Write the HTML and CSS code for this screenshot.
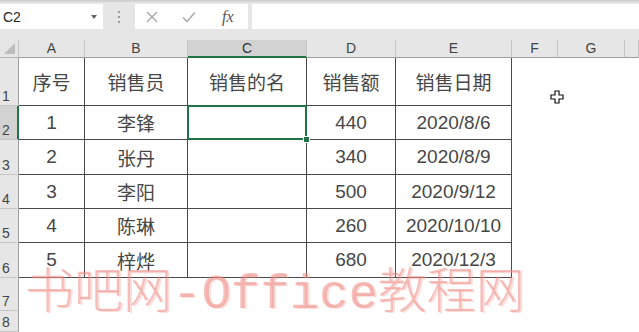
FILE: index.html
```html
<!DOCTYPE html>
<html>

<head>
    <title>销售表</title>
    <meta charset="UTF-8">
    <link rel="stylesheet" href="styles.css">
</head>

<body>
    <div class="app">
        <div class="toolbar">
            <div class="namebox">
                <span>C2</span>
                <span class="caret"></span>
            </div>
            <div class="grip"><i></i><i></i><i></i></div>
            <div class="fxbox">
                <svg class="ico" width="14" height="14" viewBox="0 0 14 14">
                    <path d="M2 2 L12 12 M12 2 L2 12" stroke="#a8a8a8" stroke-width="1.4" fill="none" />
                </svg>
                <svg class="ico" width="16" height="14" viewBox="0 0 16 14">
                    <path d="M2 7.5 L6 11.5 L14 2.5" stroke="#a8a8a8" stroke-width="1.5" fill="none" />
                </svg>
                <span class="fx">fx</span>
            </div>
            <div class="formula"></div>
        </div>

        <div class="sheet">
            <!-- column headers -->
            <div class="corner"><span class="tri"></span></div>
            <div class="colhead">A</div>
            <div class="colhead">B</div>
            <div class="colhead active">C</div>
            <div class="colhead">D</div>
            <div class="colhead">E</div>
            <div class="colhead">F</div>
            <div class="colhead">G</div>
            <div class="colhead"></div>

            <!-- row 1 -->
            <div class="rowhead">1</div>
            <div class="cell t">序号</div>
            <div class="cell t">销售员</div>
            <div class="cell t">销售的名</div>
            <div class="cell t">销售额</div>
            <div class="cell t">销售日期</div>
            <div class="blank"><svg class="cursor" width="14" height="14" viewBox="0 0 14 14">
                    <path d="M5 1 H9 V5 H13 V9 H9 V13 H5 V9 H1 V5 H5 Z" fill="#fff" stroke="#111" stroke-width="1.2" />
                </svg></div>
            <div class="blank"></div>
            <div class="blank"></div>

            <!-- row 2 -->
            <div class="rowhead active">2</div>
            <div class="cell t">1</div>
            <div class="cell t">李锋</div>
            <div class="cell t sel"></div>
            <div class="cell t">440</div>
            <div class="cell t">2020/8/6</div>
            <div class="blank"></div>
            <div class="blank"></div>
            <div class="blank"></div>

            <!-- row 3 -->
            <div class="rowhead">3</div>
            <div class="cell t">2</div>
            <div class="cell t">张丹</div>
            <div class="cell t"></div>
            <div class="cell t">340</div>
            <div class="cell t">2020/8/9</div>
            <div class="blank"></div>
            <div class="blank"></div>
            <div class="blank"></div>

            <!-- row 4 -->
            <div class="rowhead">4</div>
            <div class="cell t">3</div>
            <div class="cell t">李阳</div>
            <div class="cell t"></div>
            <div class="cell t">500</div>
            <div class="cell t">2020/9/12</div>
            <div class="blank"></div>
            <div class="blank"></div>
            <div class="blank"></div>

            <!-- row 5 -->
            <div class="rowhead">5</div>
            <div class="cell t">4</div>
            <div class="cell t">陈琳</div>
            <div class="cell t"></div>
            <div class="cell t">260</div>
            <div class="cell t">2020/10/10</div>
            <div class="blank"></div>
            <div class="blank"></div>
            <div class="blank"></div>

            <!-- row 6 -->
            <div class="rowhead">6</div>
            <div class="cell t">5</div>
            <div class="cell t">梓烨</div>
            <div class="cell t"></div>
            <div class="cell t">680</div>
            <div class="cell t">2020/12/3</div>
            <div class="blank"></div>
            <div class="blank"></div>
            <div class="blank"></div>

            <!-- row 7 -->
            <div class="rowhead">7</div>
            <div class="blank"></div>
            <div class="blank"></div>
            <div class="blank"></div>
            <div class="blank"></div>
            <div class="blank"></div>
            <div class="blank"></div>
            <div class="blank"></div>
            <div class="blank"></div>

            <!-- row 8 -->
            <div class="rowhead">8</div>
            <div class="blank"></div>
            <div class="blank"></div>
            <div class="blank"></div>
            <div class="blank"></div>
            <div class="blank"></div>
            <div class="blank"></div>
            <div class="blank"></div>
            <div class="blank"></div>
        </div>

        <div class="watermark"><span class="cjk">书吧网</span><span class="mono">-Office</span><span class="cjk">教程网</span></div>
    </div>
</body>

</html>
```

FILE: styles.css
```css
body {
    margin: 0;
    padding: 0;
    background: #fff;
    font-family: "Liberation Sans", "Noto Sans CJK SC", sans-serif;
}

.app {
    position: relative;
    width: 639px;
    height: 332px;
    overflow: hidden;
}

/* formula bar */
.toolbar {
    display: flex;
    height: 40px;
    box-sizing: border-box;
    padding: 2px 0 11px;
    background: #e6e6e6;
    border-top: 2px solid #d2d2d2;
}

.namebox {
    width: 103px;
    background: #fff;
    display: flex;
    align-items: center;
    justify-content: space-between;
    padding: 0 6px 0 3px;
    box-sizing: border-box;
    font-size: 14px;
    color: #262626;
}

.caret {
    width: 0;
    height: 0;
    border-left: 3px solid transparent;
    border-right: 3px solid transparent;
    border-top: 4px solid #666;
    margin-top: 1px;
}

.grip {
    width: 32px;
    display: flex;
    flex-direction: column;
    align-items: center;
    justify-content: center;
    gap: 3px;
}

.grip i {
    display: block;
    width: 2px;
    height: 2px;
    background: #9a9a9a;
}

.fxbox {
    width: 113px;
    background: #fff;
    display: flex;
    align-items: center;
    padding-left: 10px;
    box-sizing: border-box;
    gap: 22px;
}

.fx {
    font-family: "Liberation Serif", serif;
    font-style: italic;
    font-size: 16px;
    color: #555;
    margin-left: 3px;
}

.formula {
    flex: 1;
    margin-left: 4px;
    background: #fff;
}

/* grid */
.sheet {
    display: grid;
    grid-template-columns: 19px 66px 103px 119px 89px 116px 46px 67px 14px;
    grid-template-rows: 18px 48px 34px 35px 34px 34px 35px 33px 21px;
}

.corner {
    background: #e6e6e6;
    border-right: 1px solid #c6c6c6;
    border-bottom: 1px solid #b5b5b5;
    box-sizing: border-box;
    position: relative;
}

.tri {
    position: absolute;
    right: 3px;
    bottom: 3px;
    width: 0;
    height: 0;
    border-left: 11px solid transparent;
    border-bottom: 11px solid #bdbdbd;
}

.colhead {
    background: #e6e6e6;
    border-right: 1px solid #c6c6c6;
    border-bottom: 1px solid #9e9e9e;
    box-sizing: border-box;
    font-size: 14px;
    color: #444;
    text-align: center;
    line-height: 17px;
}

.colhead.active {
    background: #d2d2d2;
    border-bottom: 2px solid #217346;
    color: #333;
}

.rowhead {
    background: #e6e6e6;
    border-right: 1px solid #9e9e9e;
    border-bottom: 1px solid #c6c6c6;
    box-sizing: border-box;
    font-size: 14px;
    color: #444;
    display: flex;
    align-items: flex-end;
    padding-left: 2px;
    line-height: 17px;
}

.rowhead.active {
    background: #d2d2d2;
    border-right: 2px solid #217346;
}

.cell {
    box-sizing: border-box;
    display: flex;
    align-items: center;
    justify-content: center;
    font-size: 19px;
    color: #474747;
}

.cell.t {
    border-right: 1px solid #4a4a4a;
    border-bottom: 1px solid #4a4a4a;
}

.cell.sel {
    position: relative;
}

.cell.sel::after {
    content: "";
    position: absolute;
    left: -1px;
    top: -1px;
    right: -1px;
    bottom: -1px;
    border: 2px solid #217346;
}

.cell.sel::before {
    content: "";
    position: absolute;
    right: -4px;
    bottom: -4px;
    width: 5px;
    height: 5px;
    background: #217346;
    border: 1px solid #fff;
    z-index: 2;
}

.blank {
    position: relative;
}

.cursor {
    position: absolute;
    left: 38px;
    top: 32px;
}

/* watermark */
.watermark {
    position: absolute;
    left: 25px;
    top: 262px;
    white-space: nowrap;
    line-height: 50px;
    font-size: 49px;
    color: rgba(238, 128, 120, 0.5);
    text-shadow: 2px 1px 0 rgba(240, 165, 160, 0.35);
}

.watermark .cjk {
    font-family: "Noto Sans CJK SC", sans-serif;
    font-weight: 300;
}

.watermark .mono {
    font-family: "Liberation Mono", monospace;
}
```
